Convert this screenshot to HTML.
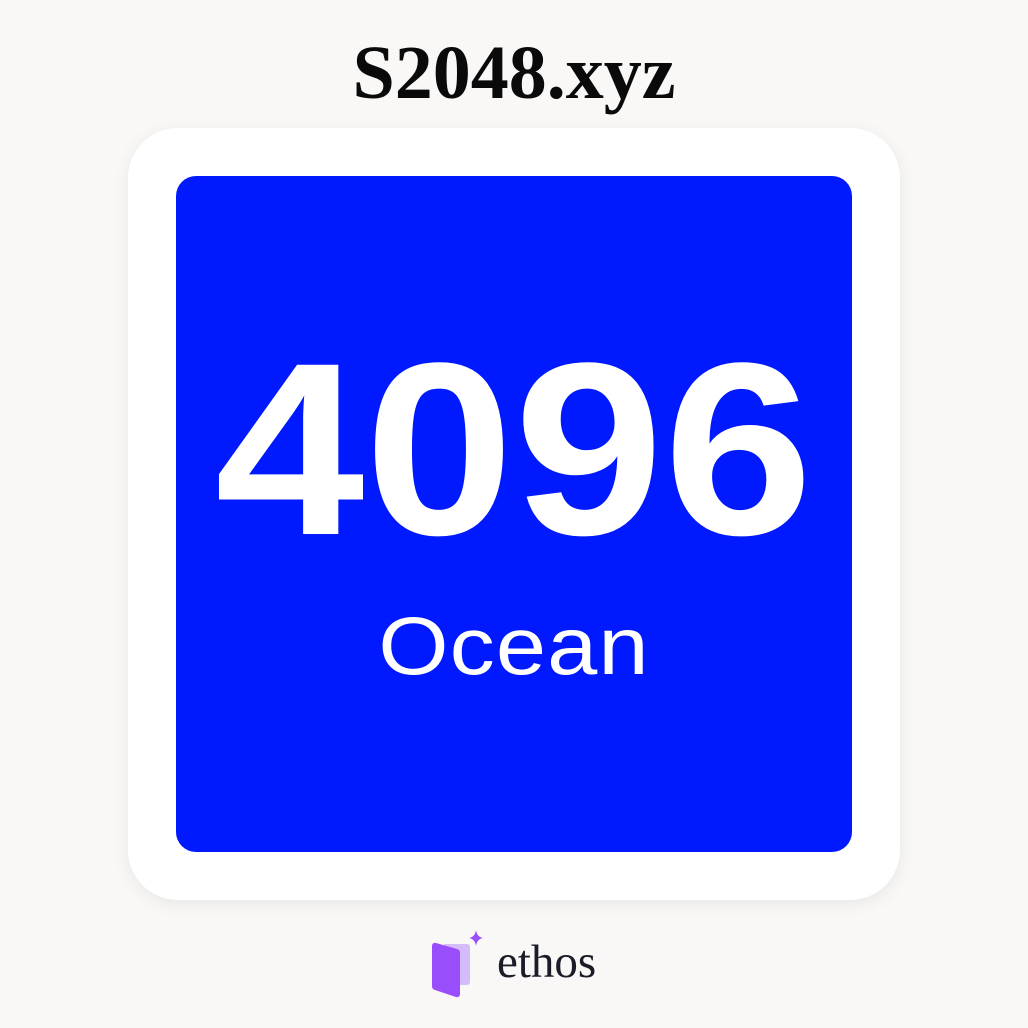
<!DOCTYPE html>
<html><head><meta charset="utf-8"><style>
html,body{margin:0;padding:0}
body{width:1028px;height:1028px;background:#f9f8f6;position:relative;overflow:hidden}
.t{position:absolute;left:0;width:1028px;text-align:center;top:23px;font:bold 76px/100px "Liberation Serif",serif;color:#0a0a0a}
.card{position:absolute;left:128px;top:128px;width:772px;height:772px;background:#fff;border-radius:50px;box-shadow:0 4px 18px rgba(0,0,0,0.07)}
.tile{position:absolute;left:176px;top:176px;width:676px;height:676px;background:#0019ff;border-radius:20px}
.n{position:absolute;left:176px;width:676px;text-align:center;top:327px;font:bold 246px/1 "Liberation Sans",sans-serif;color:#fff;transform:scaleX(1.093);transform-origin:338px 0}
.o{position:absolute;left:176px;width:676px;text-align:center;top:606px;font:82px/1 "Liberation Sans",sans-serif;color:#fff;letter-spacing:1px;transform:scaleX(1.1);transform-origin:338px 0}
.e{position:absolute;left:497px;top:934px;font:47px/56px "Liberation Serif",serif;color:#1c1c28}
</style></head><body>
<div class="t">S2048.xyz</div>
<div class="card"></div>
<div class="tile"></div>
<div class="n">4096</div>
<div class="o">Ocean</div>
<svg style="position:absolute;left:428px;top:928px" width="60" height="72" viewBox="0 0 60 72">
<path d="M16 16 H39 a3 3 0 0 1 3 3 V54 a3 3 0 0 1 -3 3 H20 Z" fill="#d4bcfb"/>
<path d="M4 18 a3 3 0 0 1 4 -3 L29 21 a4 4 0 0 1 3 4 V66 a3 3 0 0 1 -4 3 L7 62 a4 4 0 0 1 -3 -4 Z" fill="#9a4dfb"/>
<path d="M48 2 Q49 9 55 10 Q49 11 48 18 Q47 11 41 10 Q47 9 48 2Z" fill="#9a4dfb"/>
</svg>
<div class="e">ethos</div>
</body></html>
